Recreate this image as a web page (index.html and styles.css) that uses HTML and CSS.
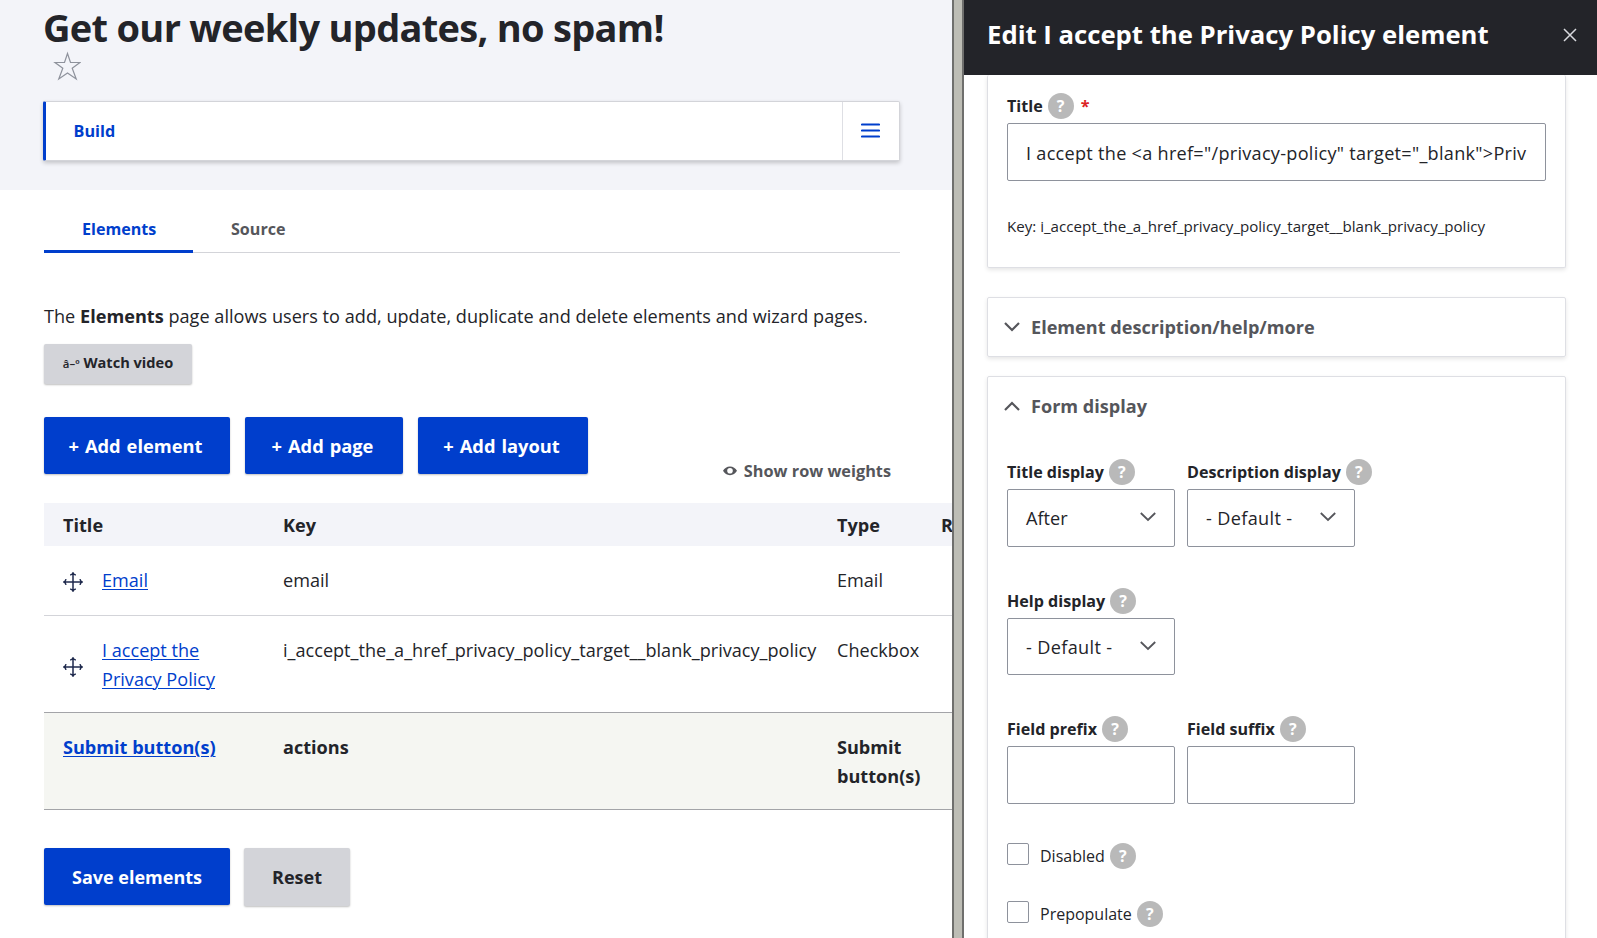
FILE: index.html
```html
<!DOCTYPE html>
<html lang="en">
<head>
    <meta charset="UTF-8">
    <meta name="viewport" content="width=device-width, initial-scale=1.0">
    <title>Get our weekly updates, no spam!</title>
    <link rel="stylesheet" href="styles.css">
</head>
<body>
    <div class="page">
        <main class="content">
            <header class="page-header">
                <h1>Get our weekly updates, no spam!</h1>
                <svg class="star" width="28" height="30" viewBox="0 0 28 30">
                    <path d="M14.5 2.5 L17.5 11.5 H27 L19.2 17.3 L23.2 28 L14.5 21.9 L5.8 28 L9.8 17.3 L2 11.5 H11.5 Z" fill="none" stroke="#8e929c" stroke-width="1.2"/>
                </svg>
                <nav class="primary-tabs">
                    <a class="primary-tab">Build</a>
                    <button class="menu-toggle" type="button">
                        <svg width="19" height="15" viewBox="0 0 19 15">
                            <path d="M1 1.5 H18 M1 7.5 H18 M1 13.5 H18" stroke="#003ecc" stroke-width="2.2" stroke-linecap="round"/>
                        </svg>
                    </button>
                </nav>
            </header>

            <nav class="tabs">
                <a class="tab active">Elements</a>
                <a class="tab">Source</a>
            </nav>

            <p class="intro">The <strong>Elements</strong> page allows users to add, update, duplicate and delete elements and wizard pages.</p>
            <button class="button small" type="button"><span class="play">â–º</span> Watch video</button>

            <div class="toolbar">
                <button class="button primary add-element" type="button">+ Add element</button>
                <button class="button primary add-page" type="button">+ Add page</button>
                <button class="button primary add-layout" type="button">+ Add layout</button>
                <a class="row-weights">
                    <svg width="14" height="10" viewBox="0 0 14 10">
                        <path fill-rule="evenodd" d="M7 .5 C10 .5 12.5 2.3 14 4.8 C12.5 7.4 10 9.2 7 9.2 C4 9.2 1.5 7.4 0 4.8 C1.5 2.3 4 .5 7 .5 Z M7 2 A2.8 2.8 0 1 0 7 7.6 A2.8 2.8 0 1 0 7 2 Z" fill="#55565b"/>
                    </svg>
                    <span>Show row weights</span>
                </a>
            </div>

            <table>
                <thead>
                    <tr>
                        <th class="col-title">Title</th>
                        <th class="col-key">Key</th>
                        <th class="col-type">Type</th>
                        <th>Required</th>
                    </tr>
                </thead>
                <tbody>
                    <tr>
                        <td>
                            <div class="handle-cell">
                                <svg class="handle" width="20" height="20" viewBox="0 0 20 20">
                                    <path d="M10 1 V19 M1 10 H19 M7.2 3 Q9.5 2.5 10 1 Q10.5 2.5 12.8 3 M7.2 17 Q9.5 17.5 10 19 Q10.5 17.5 12.8 17 M3 7.2 Q2.5 9.5 1 10 Q2.5 10.5 3 12.8 M17 7.2 Q17.5 9.5 19 10 Q17.5 10.5 17 12.8" fill="none" stroke="#1f2a4d" stroke-width="1.5"/>
                                </svg>
                                <a class="link">Email</a>
                            </div>
                        </td>
                        <td>email</td>
                        <td>Email</td>
                        <td></td>
                    </tr>
                    <tr>
                        <td>
                            <div class="handle-cell">
                                <svg class="handle" width="20" height="20" viewBox="0 0 20 20">
                                    <path d="M10 1 V19 M1 10 H19 M7.2 3 Q9.5 2.5 10 1 Q10.5 2.5 12.8 3 M7.2 17 Q9.5 17.5 10 19 Q10.5 17.5 12.8 17 M3 7.2 Q2.5 9.5 1 10 Q2.5 10.5 3 12.8 M17 7.2 Q17.5 9.5 19 10 Q17.5 10.5 17 12.8" fill="none" stroke="#1f2a4d" stroke-width="1.5"/>
                                </svg>
                                <a class="link">I accept the<br>Privacy Policy</a>
                            </div>
                        </td>
                        <td>i_accept_the_a_href_privacy_policy_target__blank_privacy_policy</td>
                        <td>Checkbox</td>
                        <td></td>
                    </tr>
                    <tr class="actions-row">
                        <td><a class="link">Submit button(s)</a></td>
                        <td>actions</td>
                        <td>Submit<br>button(s)</td>
                        <td></td>
                    </tr>
                </tbody>
            </table>

            <div class="form-actions">
                <button class="button primary save" type="button">Save elements</button>
                <button class="button reset" type="button">Reset</button>
            </div>
        </main>

        <div class="splitter"></div>

        <aside class="panel">
            <div class="panel-header">
                <h2>Edit I accept the Privacy Policy element</h2>
                <svg width="14" height="14" viewBox="0 0 14 14">
                    <path d="M1 1 L13 13 M13 1 L1 13" stroke="#d8d9de" stroke-width="1.5"/>
                </svg>
            </div>

            <div class="panel-body">
                <section class="card card-title">
                    <div class="label title-label">Title <span class="help">?</span><span class="required">*</span></div>
                    <div class="field wide">I accept the &lt;a href="/privacy-policy" target="_blank"&gt;Priv</div>
                    <p class="machine-key">Key: i_accept_the_a_href_privacy_policy_target__blank_privacy_policy</p>
                </section>

                <section class="card card-closed">
                    <div class="summary">
                        <svg width="16" height="12" viewBox="0 0 16 12"><path d="M1 2 L8 9 L15 2" fill="none" stroke="#55565b" stroke-width="2.2"/></svg>
                        <span>Element description/help/more</span>
                    </div>
                </section>

                <section class="card card-open">
                    <div class="summary">
                        <svg width="16" height="12" viewBox="0 0 16 12"><path d="M1 10 L8 3 L15 10" fill="none" stroke="#55565b" stroke-width="2.2"/></svg>
                        <span>Form display</span>
                    </div>
                    <div class="fields">
                        <div class="form-item">
                            <div class="label">Title display <span class="help">?</span></div>
                            <div class="field select">After
                                <svg width="16" height="10" viewBox="0 0 16 10"><path d="M.8 1 L8 8 L15.2 1" fill="none" stroke="#55565b" stroke-width="1.8"/></svg>
                            </div>
                        </div>
                        <div class="form-item">
                            <div class="label">Description display <span class="help">?</span></div>
                            <div class="field select default">- Default -
                                <svg width="16" height="10" viewBox="0 0 16 10"><path d="M.8 1 L8 8 L15.2 1" fill="none" stroke="#55565b" stroke-width="1.8"/></svg>
                            </div>
                        </div>
                        <div class="form-item alone">
                            <div class="label">Help display <span class="help">?</span></div>
                            <div class="field select default">- Default -
                                <svg width="16" height="10" viewBox="0 0 16 10"><path d="M.8 1 L8 8 L15.2 1" fill="none" stroke="#55565b" stroke-width="1.8"/></svg>
                            </div>
                        </div>
                        <div class="form-item">
                            <div class="label">Field prefix <span class="help">?</span></div>
                            <div class="field"></div>
                        </div>
                        <div class="form-item">
                            <div class="label">Field suffix <span class="help">?</span></div>
                            <div class="field"></div>
                        </div>
                    </div>
                    <div class="check"><span class="box"></span>Disabled <span class="help">?</span></div>
                    <div class="check"><span class="box"></span>Prepopulate <span class="help">?</span></div>
                </section>
            </div>
        </aside>
    </div>
</body>
</html>
```
FILE: styles.css
```css
* {
    box-sizing: border-box;
}
body {
    margin: 0;
    background: #fff;
    color: #232429;
    font-family: "Open Sans", "Noto Sans", sans-serif;
    font-size: 18.1px;
    line-height: 29px;
}
h1, h2, p {
    margin: 0;
}
button {
    font-family: inherit;
}
.page {
    display: flex;
    height: 938px;
    overflow: hidden;
}

/* main content */
.content {
    width: 952px;
    flex: none;
    overflow: hidden;
    white-space: nowrap;
}
.page-header {
    height: 190px;
    padding: 3px 52px 0 43px;
    background: #f3f4f9;
}
h1 {
    font-size: 38px;
    line-height: 48px;
    letter-spacing: -0.7px;
}
.star {
    display: block;
    margin: 0 0 20px 10px;
}
.primary-tabs {
    display: flex;
    height: 60px;
    background: #fff;
    border: 1px solid #d3d4d9;
    border-left: 3px solid #003ecc;
    border-radius: 2px;
    box-shadow: 0 2px 4px rgba(0, 0, 0, 0.2);
}
.primary-tab {
    flex: 1;
    padding-left: 27.5px;
    color: #003ecc;
    font-size: 16.2px;
    font-weight: bold;
    line-height: 58px;
}
.menu-toggle {
    display: flex;
    align-items: center;
    justify-content: center;
    width: 57px;
    padding: 0 2px 1px 0;
    background: none;
    border: 0;
    border-left: 1px solid #dedfe4;
}
.tabs {
    display: flex;
    height: 42px;
    margin: 21px 52px 0 44px;
    border-bottom: 1px solid #d3d4d9;
}
.tab {
    height: 42px;
    padding: 0 38px;
    color: #55565b;
    font-size: 16.1px;
    font-weight: bold;
    line-height: 36px;
}
.tab.active {
    width: 149px;
    color: #003ecc;
    border-bottom: 3px solid #003ecc;
}
.intro {
    margin: 49px 0 13px 44px;
    letter-spacing: 0.02px;
}
.button {
    height: 57px;
    padding: 0;
    background: #d3d4d9;
    color: #232429;
    border: 0;
    border-radius: 2px;
    font-size: 18px;
    font-weight: bold;
    line-height: 57px;
    box-shadow: 0 1px 2px rgba(0, 0, 0, 0.25);
}
.button.primary {
    background: #003ecc;
    color: #fff;
}
.button.small {
    display: block;
    width: 148px;
    height: 40px;
    padding-bottom: 3px;
    margin-left: 44px;
    font-size: 14.6px;
    line-height: 37px;
}
.play {
    font-size: 11.5px;
    font-weight: 600;
}
.toolbar {
    display: flex;
    height: 86px;
    margin: 33px 61px 0 44px;
}
.toolbar .button {
    padding-right: 3px;
    font-size: 18.3px;
    line-height: 56px;
    word-spacing: 1.2px;
}
.add-element {
    width: 186px;
}
.add-page {
    width: 158px;
    margin-left: 15px;
}
.add-layout {
    width: 170px;
    margin-left: 15px;
}
.row-weights {
    display: flex;
    align-items: center;
    gap: 7px;
    height: 24px;
    margin: 42px 0 0 auto;
    color: #55565b;
    font-size: 16.3px;
    font-weight: bold;
    line-height: 24px;
}

/* elements table */
table {
    width: 1000px;
    margin-left: 44px;
    table-layout: fixed;
    border-spacing: 0;
}
th {
    height: 43px;
    padding: 1px 19px 0;
    background: #f3f4f9;
    line-height: 42px;
    text-align: left;
}
.col-title {
    width: 220px;
}
.col-key {
    width: 554px;
}
.col-type {
    width: 104px;
}
td {
    height: 70px;
    padding: 20px 0 18px 19px;
    border-bottom: 1px solid #d3d4d9;
    vertical-align: top;
}
tbody tr:nth-child(2) td {
    height: 97px;
    border-color: #a3a4a8;
}
.actions-row td {
    height: 97px;
    background: #f5f6f2;
    border-color: #a3a4a8;
    font-weight: bold;
}
.handle-cell {
    display: flex;
    align-items: center;
    gap: 19px;
}
.handle {
    margin-top: 3px;
}
.link {
    color: #003ecc;
    text-decoration: underline;
    text-decoration-thickness: 1px;
    text-underline-offset: 2px;
}
.form-actions {
    display: flex;
    gap: 14px;
    margin: 38px 0 0 44px;
}
.save {
    width: 186px;
    padding-top: 1px;
}
.reset {
    width: 106px;
    height: 58px;
}

.splitter {
    width: 12px;
    flex: none;
    background: #bdbdb5;
    border: solid #6f6f6d;
    border-width: 0 2px;
}

/* edit panel */
.panel {
    flex: 1;
    white-space: nowrap;
}
.panel-header {
    display: flex;
    align-items: center;
    justify-content: space-between;
    height: 75px;
    padding: 0 20px 5px 23px;
    background: #232429;
    color: #fff;
}
h2 {
    font-size: 25.7px;
    line-height: 34px;
}
.panel-body {
    padding: 0 31px 0 23px;
}
.card {
    padding: 0 19px;
    border: 1px solid #dedfe4;
    border-radius: 2px;
    box-shadow: 0 2px 4px rgba(0, 0, 0, 0.1);
}
.card-title {
    height: 193px;
    padding-top: 18px;
    border-top: 0;
}
.card-closed {
    height: 60px;
    margin-top: 29px;
}
.card-open {
    height: 600px;
    margin-top: 19px;
}
.label {
    display: flex;
    align-items: center;
    gap: 5px;
    height: 26px;
    margin-bottom: 4px;
    font-size: 16.1px;
    font-weight: bold;
    line-height: 26px;
}
.help {
    width: 26px;
    height: 26px;
    flex: none;
    background: #b9b9b9;
    border-radius: 50%;
    color: #fff;
    font-size: 16px;
    font-weight: bold;
    line-height: 26px;
    text-align: center;
}
.required {
    margin-left: 2px;
    color: #dc2323;
}
.field {
    display: flex;
    align-items: center;
    width: 168px;
    height: 58px;
    padding: 0 18px;
    border: 1px solid #8e929c;
    border-radius: 2px;
}
.field.wide {
    width: 539px;
    padding-top: 2px;
    letter-spacing: 0.28px;
}
.select {
    justify-content: space-between;
}
.select.default {
    letter-spacing: 0.35px;
}
.select svg {
    flex: none;
    margin-top: -3px;
}
.machine-key {
    margin-top: 31px;
    font-size: 15.1px;
    line-height: 28px;
}
.summary {
    display: flex;
    align-items: center;
    gap: 11px;
    height: 58px;
    margin-left: -3px;
    color: #55565b;
    font-weight: bold;
}
.fields {
    display: grid;
    grid-template-columns: 168px 168px;
    gap: 41px 12px;
    margin-top: 24px;
}
.alone {
    grid-column: span 2;
}
.alone .field {
    height: 57px;
    padding-top: 1px;
}
.check {
    display: flex;
    align-items: center;
    height: 26px;
    margin-top: 39px;
    font-size: 16px;
}
.check + .check {
    margin-top: 32px;
}
.check .help {
    margin-left: 5px;
}
.box {
    width: 22px;
    height: 22px;
    margin: -4px 11px 0 0;
    border: 1px solid #8e929c;
    border-radius: 2px;
}
```
